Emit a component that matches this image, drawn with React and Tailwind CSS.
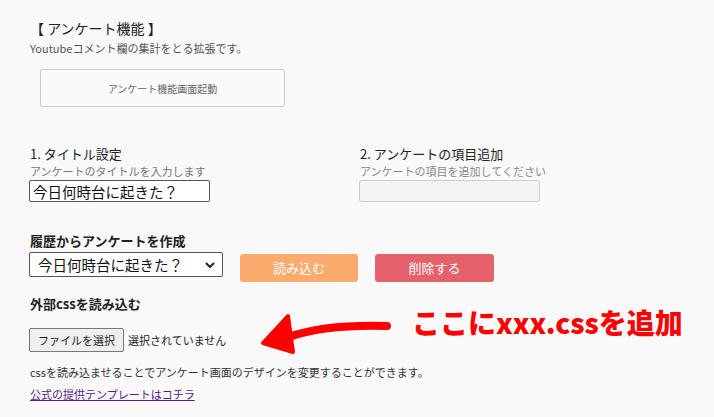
import { useState } from 'react'

const jp = { fontFamily: '"Noto Sans CJK JP", "Noto Sans", sans-serif' }

function Chevron() {
  return (
    <svg className="w-3 h-3 text-gray-800" viewBox="0 0 12 12" fill="none" stroke="currentColor">
      <path d="M2.5 4.5L6 8l3.5-3.5" strokeWidth={2} strokeLinecap="round" strokeLinejoin="round" />
    </svg>
  )
}

export default function App() {
  const [title, setTitle] = useState('今日何時台に起きた？')
  const [item, setItem] = useState('')

  return (
    <div className="relative w-[714px] h-[417px] bg-[#f9f9f9] text-[#333] overflow-hidden" style={jp}>
      <div className="pl-[30px] pt-[18px]">
        <h1 className="text-[14px] leading-[20px] text-[#222]">【 アンケート機能 】</h1>
        <p className="text-[11px] leading-[16px] text-[#555] mt-[2px]">Youtubeコメント欄の集計をとる拡張です。</p>

        <button className="mt-[13px] ml-[10px] w-[245px] h-[38px] border border-[#ccc] rounded-[2px] bg-[#fafafa] text-[10px] text-[#666]">
          アンケート機能画面起動
        </button>

        <div className="flex mt-[38px]">
          <div className="w-[330px]">
            <div className="text-[13px] leading-[18px] text-[#222]">1. タイトル設定</div>
            <div className="text-[11px] leading-[16px] text-[#777]">アンケートのタイトルを入力します</div>
            <input
              value={title}
              onChange={(e) => setTitle(e.target.value)}
              className="block mt-[1px] -ml-[1px] w-[181px] h-[22px] px-[3px] border border-[#555] rounded-[2px] bg-white text-[14.5px] leading-[20px] text-[#111] outline-none"
            />
          </div>
          <div>
            <div className="text-[13px] leading-[18px] text-[#222]">2. アンケートの項目追加</div>
            <div className="text-[11px] leading-[16px] text-[#888]">アンケートの項目を追加してください</div>
            <input
              value={item}
              onChange={(e) => setItem(e.target.value)}
              className="block mt-[1px] -ml-[1px] w-[181px] h-[22px] px-[4px] border border-[#ccc] rounded-[3px] bg-[#f4f4f4] text-[13px] outline-none"
            />
          </div>
        </div>

        <div className="mt-[30px] text-[13px] leading-[18px] font-bold text-[#222]">履歴からアンケートを作成</div>
        <div className="flex items-start mt-[2px]">
          <div className="relative -ml-[1px] w-[194px] h-[25px] border border-[#555] rounded-[2px] bg-white flex items-center pl-[8px]">
            <span className="text-[14.5px] leading-[20px] text-[#111]">今日何時台に起きた？</span>
            <span className="absolute right-[6px] top-[6px]"><Chevron /></span>
          </div>
          <button className="ml-[17px] mt-[2px] w-[118px] h-[28px] rounded-[3px] bg-[#fcab6f] text-white text-[13px]">読み込む</button>
          <button className="ml-[17px] mt-[2px] w-[119px] h-[28px] rounded-[3px] bg-[#e5626c] text-white text-[13px]">削除する</button>
        </div>

        <div className="mt-[13px] text-[13px] leading-[18px] font-bold text-[#222]">外部cssを読み込む</div>
        <div className="flex items-center mt-[15px]">
          <button className="-ml-[1px] w-[95px] h-[24px] border border-[#777] rounded-[2px] bg-[#efefef] text-[11px] text-[#222]">ファイルを選択</button>
          <span className="ml-[4px] text-[11px] text-[#222]">選択されていません</span>
        </div>

        <p className="mt-[12px] text-[11px] leading-[16px] text-[#333]">cssを読み込ませることでアンケート画面のデザインを変更することができます。</p>
        <a href="#" className="text-[11px] leading-[16px] text-[#551a8b] underline">公式の提供テンプレートはコチラ</a>
      </div>

      <svg className="absolute left-[255px] top-[305px] w-[140px] h-[55px]" viewBox="0 0 140 55" fill="none">
        <path d="M132 21 C 95 20, 62 22, 34 32" stroke="#ff0000" strokeWidth={8} strokeLinecap="round" />
        <path d="M8 38 L 33 11 L 38 47 Z" fill="#ff0000" stroke="#ff0000" strokeWidth={4} strokeLinejoin="round" />
      </svg>

      <div className="absolute left-[412px] top-[303px] text-[28px] leading-[38px] font-black text-[#ff0000] tracking-[0px]" style={jp}>
        ここにxxx.cssを追加
      </div>
    </div>
  )
}
